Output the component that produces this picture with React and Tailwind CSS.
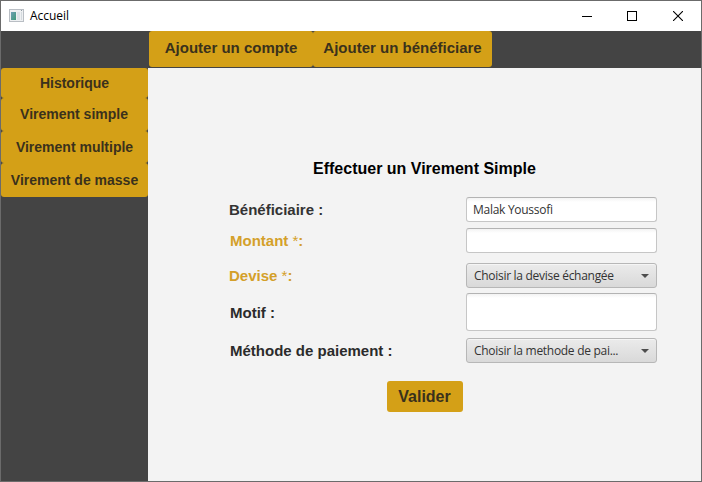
import React from "react";

const ARIAL = "font-['Liberation_Sans',Arial,sans-serif]";
const UI = "font-['Open_Sans','Noto_Sans',sans-serif]";

function TitleBar() {
  return (
    <header className="flex h-[30px] shrink-0 items-center bg-white pl-2">
      <svg width="15" height="13" viewBox="0 0 15 13" className="mb-[2px] shrink-0" shapeRendering="crispEdges">
        <defs>
          <linearGradient id="pane" x1="0" y1="0" x2="1" y2="1">
            <stop offset="0" stopColor="#6f9fb5" />
            <stop offset="1" stopColor="#3f9a78" />
          </linearGradient>
        </defs>
        <rect x="0" y="0" width="15" height="13" fill="#b9bec4" />
        <rect x="1" y="1" width="13" height="11" fill="#eef0f2" />
        <rect x="2" y="3" width="5" height="8" fill="url(#pane)" />
        <rect x="8" y="3" width="3" height="8" fill="#dde3e7" />
        <rect x="12" y="1" width="1" height="1" fill="#8f9ba3" />
        <rect x="12" y="3" width="1" height="8" fill="#d4dade" />
      </svg>
      <span className={`${UI} ml-[6px] text-[12px] leading-[16px] tracking-[-0.05px] text-black`}>Accueil</span>
      <div className="ml-auto flex h-full items-center">
        <button className="flex h-full w-[46px] items-center justify-center" aria-label="Réduire">
          <svg width="10" height="10" shapeRendering="crispEdges">
            <path d="M0 5.5h10" stroke="#000" />
          </svg>
        </button>
        <button className="flex h-full w-[46px] items-center justify-center pr-[2px]" aria-label="Agrandir">
          <svg width="10" height="10" shapeRendering="crispEdges">
            <rect x="0.5" y="0.5" width="9" height="9" fill="none" stroke="#000" />
          </svg>
        </button>
        <button className="flex h-full w-[45px] items-center justify-center pr-px" aria-label="Fermer">
          <svg width="10" height="10">
            <path d="M0 0l10 10M10 0L0 10" stroke="#000" strokeWidth="1.1" />
          </svg>
        </button>
      </div>
    </header>
  );
}

function GoldButton({ className, children }) {
  return (
    <button
      className={`${ARIAL} flex shrink-0 items-center justify-center whitespace-nowrap rounded-[3px] bg-[#d4a017] font-bold text-[#3a311c] ${className}`}
    >
      {children}
    </button>
  );
}

function Label({ className, required, children }) {
  return (
    <label className={`${ARIAL} whitespace-nowrap text-[15px] font-bold leading-[17px] ${className}`}>
      {children} {required && <span className="font-normal">*</span>}:
    </label>
  );
}

function Field({ className, children }) {
  return (
    <div
      className={`${UI} w-[191px] shrink-0 rounded-[3px] border border-t-[#b3b3b3] border-[#c6c6c6] bg-white bg-linear-to-b from-[#f3f3f3] to-white to-[4px] px-[6px] text-[12px] leading-[23px] tracking-[-0.28px] text-[#333] ${className}`}
    >
      {children}
    </div>
  );
}

function Combo({ children }) {
  return (
    <div
      className={`${UI} flex h-[25px] w-[191px] shrink-0 items-center justify-between rounded-[3px] border border-[#b7b7b7] bg-linear-to-b from-[#ebebeb] to-[#d9d9d9] pl-[7px] pr-[7px] text-[12px] leading-[23px] tracking-[-0.29px] text-[#333] shadow-[inset_0_1px_0_#f5f5f5]`}
    >
      <span className="whitespace-nowrap">{children}</span>
      <svg width="8" height="4" viewBox="0 0 8 4">
        <path d="M0 0h8L4 4z" fill="#4d4d4d" />
      </svg>
    </div>
  );
}

function Row({ className, children }) {
  return <div className={`flex w-[428px] items-center justify-between ${className}`}>{children}</div>;
}

export default function App() {
  return (
    <div className="flex h-[482px] w-[702px] flex-col overflow-hidden border border-[#6b6b6b] bg-[#f3f3f3]">
      <TitleBar />
      <nav className="flex h-[37px] shrink-0 items-start bg-[#444] pl-[148px]">
        <GoldButton className="h-[36px] w-[164px] pb-[2px] text-[15px]">Ajouter un compte</GoldButton>
        <GoldButton className="h-[36px] w-[179px] pb-[2px] text-[15px]">Ajouter un bénéficiare</GoldButton>
      </nav>
      <div className="flex min-h-0 flex-1">
        <aside className="flex w-[147px] shrink-0 flex-col bg-[#444] text-[14px]">
          <GoldButton className="h-[30px]">Historique</GoldButton>
          <GoldButton className="h-[33px] pr-px">Virement simple</GoldButton>
          <GoldButton className="h-[32px]">Virement multiple</GoldButton>
          <GoldButton className="h-[34px]">Virement de masse</GoldButton>
        </aside>
        <main className="flex flex-1 flex-col pl-[81px] pt-[92px]">
          <h1 className={`${ARIAL} ml-[84px] text-[16px] font-bold leading-[18px] text-black`}>
            Effectuer un Virement Simple
          </h1>
          <Row className="mt-[19px]">
            <Label className="text-[#333]">Bénéficiaire</Label>
            <Field className="h-[25px]">Malak Youssofi</Field>
          </Row>
          <Row className="mt-[6px]">
            <Label required className="ml-px text-[#d4a029]">Montant</Label>
            <Field className="h-[25px]" />
          </Row>
          <Row className="mt-[10px]">
            <Label required className="text-[#d4a029]">Devise</Label>
            <Combo>Choisir la devise échangée</Combo>
          </Row>
          <Row className="mt-[5px]">
            <Label className="ml-px text-[#2b2b2b]">Motif</Label>
            <Field className="h-[38px]" />
          </Row>
          <Row className="mt-[7px]">
            <Label className="ml-px text-[#2b2b2b]">Méthode de paiement</Label>
            <Combo>Choisir la methode de pai...</Combo>
          </Row>
          <GoldButton className="ml-[158px] mt-[18px] h-[31px] w-[76px] pr-px text-[16px]">Valider</GoldButton>
        </main>
      </div>
    </div>
  );
}
